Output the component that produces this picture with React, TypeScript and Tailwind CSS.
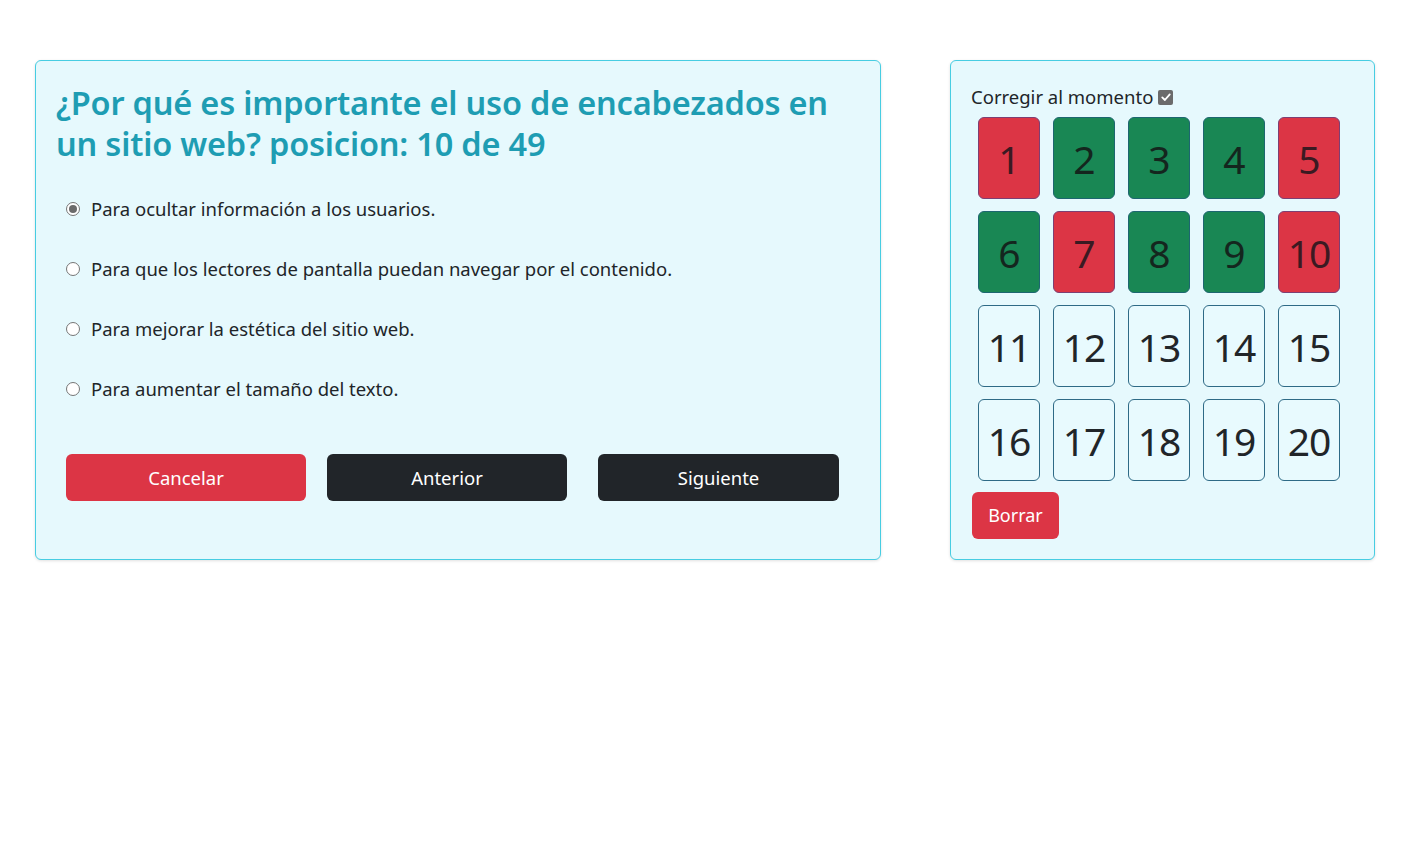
import React from "react";

const font = { fontFamily: '"Noto Sans", "Open Sans", sans-serif' };

function Radio({ checked }: { checked?: boolean }) {
  return (
    <span className="flex h-[14px] w-[14px] items-center justify-center rounded-full border border-[#767676] bg-white">
      {checked && <span className="h-[8px] w-[8px] rounded-full bg-[#6b6b6b]" />}
    </span>
  );
}

const options = [
  "Para ocultar información a los usuarios.",
  "Para que los lectores de pantalla puedan navegar por el contenido.",
  "Para mejorar la estética del sitio web.",
  "Para aumentar el tamaño del texto.",
];

type Kind = "red" | "green" | "none";
const states: Kind[] = ["red", "green", "green", "green", "red", "green", "red", "green", "green", "red"];

function NumBtn({ n, kind }: { n: number; kind: Kind }) {
  const cls =
    kind === "red"
      ? "bg-[#dc3545] border-[#7d3f73] text-[#3b1a22]"
      : kind === "green"
      ? "bg-[#198754] border-[#1d6670] text-[#14261e]"
      : "bg-[#e8fafe] border-[#2e6a86] text-[#212529]";
  return (
    <div
      className={`flex h-[82px] w-[62px] items-center justify-center rounded-[6px] border text-[39px] leading-none tracking-[-1px] ${cls}`}
    >
      {n}
    </div>
  );
}

export default function App() {
  return (
    <div className="min-h-[864px] bg-white" style={font}>
      <div className="flex items-start gap-[69px] pl-[35px] pt-[60px]">
        <div className="h-[500px] w-[846px] rounded-[6px] border border-[#47cde2] bg-[#e6f9fd] px-[20px] pt-[21px] shadow-[0_1px_3px_rgba(0,0,0,0.12)]">
          <h2 className="text-[32.5px] font-semibold leading-[41px] tracking-[-0.2px] text-[#1e9db3]">
            ¿Por qué es importante el uso de encabezados en un sitio web? posicion: 10 de 49
          </h2>
          <div className="mt-[15px]">
            {options.map((o, i) => (
              <div key={i} className="flex h-[60px] items-center pl-[10px] text-[18.5px] text-[#212529]">
                <Radio checked={i === 0} />
                <span className="ml-[11px]">{o}</span>
              </div>
            ))}
          </div>
          <div className="mt-[35px] flex pl-[10px] text-[18.5px] text-white">
            <button className="flex h-[47px] w-[240px] items-center justify-center rounded-[6px] bg-[#dc3545]">
              Cancelar
            </button>
            <button className="ml-[21px] flex h-[47px] w-[240px] items-center justify-center rounded-[6px] bg-[#212529]">
              Anterior
            </button>
            <button className="ml-[31px] flex h-[47px] w-[241px] items-center justify-center rounded-[6px] bg-[#212529]">
              Siguiente
            </button>
          </div>
        </div>

        <div className="h-[500px] w-[425px] rounded-[6px] border border-[#47cde2] bg-[#e6f9fd] px-[20px] pt-[23px] shadow-[0_1px_3px_rgba(0,0,0,0.12)]">
          <div className="flex h-[26px] items-center text-[18.5px] text-[#212529]">
            <span>Corregir al momento</span>
            <span className="ml-[5px] flex h-[15px] w-[15px] items-center justify-center rounded-[2px] bg-[#6b6b6b]">
              <svg viewBox="0 0 16 16" className="h-[12px] w-[12px]">
                <path d="M3 8.5 L6.5 12 L13 4.5" fill="none" stroke="white" strokeWidth="2.4" strokeLinecap="round" strokeLinejoin="round" />
              </svg>
            </span>
          </div>
          <div className="mt-[7px] grid grid-cols-[repeat(5,62px)] gap-x-[13px] gap-y-[12px] pl-[7px]">
            {Array.from({ length: 20 }, (_, i) => (
              <NumBtn key={i} n={i + 1} kind={i < 10 ? states[i] : "none"} />
            ))}
          </div>
          <button className="mt-[11px] ml-[1px] flex h-[47px] w-[87px] items-center justify-center rounded-[6px] bg-[#dc3545] text-[18px] text-white">
            Borrar
          </button>
        </div>
      </div>
    </div>
  );
}
